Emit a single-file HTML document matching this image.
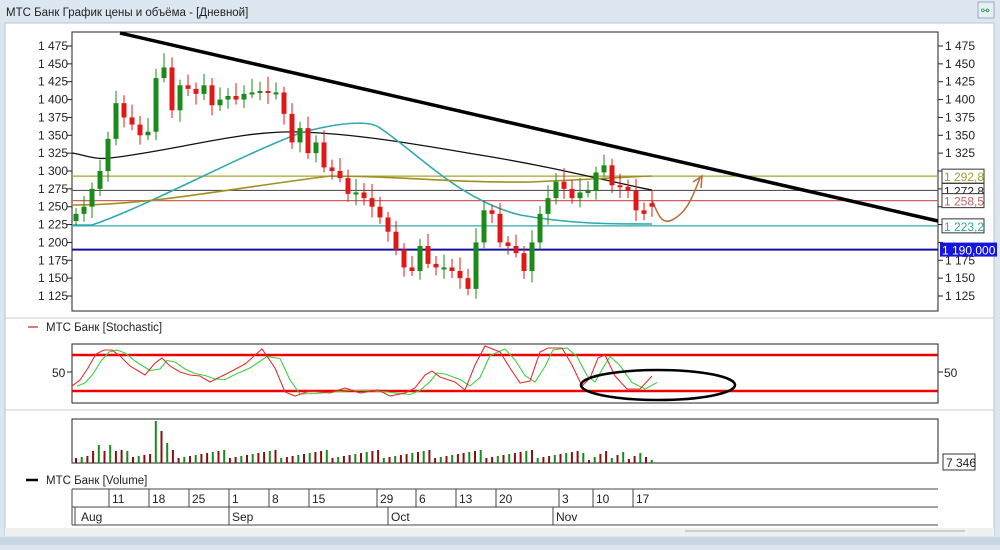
<!DOCTYPE html>
<html><head><meta charset="utf-8"><style>
body{margin:0;width:1000px;height:545px;overflow:hidden;background:#dce6f0;font-family:"Liberation Sans",sans-serif}
svg text{font-family:"Liberation Sans",sans-serif}
</style></head><body>
<svg id="s" width="1000" height="545" xmlns="http://www.w3.org/2000/svg">
<rect x="0" y="0" width="1000" height="545" fill="#dce6f0"/>
<rect x="0" y="0" width="1000" height="23" fill="#dde7f1"/>
<text x="6" y="16" font-size="11.5" fill="#222">МТС Банк График цены и объёма - [Дневной]</text>
<rect x="978" y="2" width="16" height="16" fill="#e6eef6" stroke="#9ab" stroke-width="1"/>
<text x="981" y="14" font-size="10" fill="#1a9a2a">⚯</text>
<rect x="5" y="23" width="989" height="512" fill="#fff" stroke="#b8c6d4"/>
<rect x="5" y="528" width="989" height="8" fill="#f0f0f0"/>
<line x1="685" y1="531" x2="965" y2="531" stroke="#aaa"/>
<rect x="0" y="537" width="1000" height="8" fill="#c8d6e4"/>
<!-- main plot -->
<rect x="72" y="32" width="866" height="279" fill="#fff" stroke="#222"/>
<g id="ylab" font-size="12" fill="#222"></g>
<g id="lines"></g>
<g id="candles"></g>
<!-- separators -->
<line x1="5" y1="318" x2="994" y2="318" stroke="#ccc"/>
<line x1="5" y1="410" x2="994" y2="410" stroke="#ccc"/>
<line x1="28" y1="327" x2="38" y2="327" stroke="#d44" stroke-width="1.5"/>
<text x="46" y="331" font-size="11.5" fill="#222">МТС Банк [Stochastic]</text>
<rect x="72" y="344" width="866" height="59" fill="none" stroke="#222"/>
<line x1="72" y1="355" x2="938" y2="355" stroke="#e00" stroke-width="2.5"/>
<line x1="72" y1="391" x2="938" y2="391" stroke="#e00" stroke-width="2.5"/>
<text x="52" y="377" font-size="12" fill="#222">50</text><line x1="67" y1="372" x2="72" y2="372" stroke="#222"/>
<text x="944" y="377" font-size="12" fill="#222">50</text><line x1="938" y1="372" x2="943" y2="372" stroke="#222"/>
<g id="stoch"></g>
<ellipse cx="658" cy="385" rx="77" ry="15" fill="none" stroke="#000" stroke-width="2.5"/>
<rect x="72" y="419" width="866" height="44" fill="none" stroke="#222"/>
<g id="vol"></g>
<rect x="943" y="454" width="32" height="16" fill="#fff" stroke="#333"/>
<text x="946" y="467" font-size="12" fill="#222">7 346</text>
<line x1="26" y1="480" x2="38" y2="480" stroke="#000" stroke-width="2.5"/>
<text x="46" y="484" font-size="11.5" fill="#222">МТС Банк [Volume]</text>
<g font-size="12" fill="#222" stroke-width="1">
<line x1="72" y1="489" x2="938" y2="489" stroke="#444"/>
<line x1="72" y1="507" x2="938" y2="507" stroke="#444"/>
<line x1="72" y1="525" x2="938" y2="525" stroke="#444"/>
<line x1="72" y1="489" x2="72" y2="525" stroke="#444"/>
<line x1="75" y1="507" x2="75" y2="525" stroke="#444"/>
<g id="dates"></g>
</g>
</svg>
<script>
const NS="http://www.w3.org/2000/svg";
function el(p,t,a,txt){const e=document.createElementNS(NS,t);for(const k in a)e.setAttribute(k,a[k]);if(txt!=null)e.textContent=txt;document.getElementById(p).appendChild(e);return e;}
const Y=p=>46+(1475-p)*0.7143;
for(let p=1125;p<=1475;p+=25){const y=Y(p);const l=(p/1000|0)+" "+String(p%1000).padStart(3,"0");
if(![1200,1250,1300].includes(p)||true){
el("ylab","text",{x:68,y:y+4,"text-anchor":"end"},l);
if(!(p==1300||p==1250||p==1200))el("ylab","text",{x:945,y:y+4},l);}
el("ylab","line",{x1:67,y1:y,x2:72,y2:y,stroke:"#222"});el("ylab","line",{x1:938,y1:y,x2:943,y2:y,stroke:"#222"});}
// horizontal level lines
[[1292.8,"#a8a030","1 292,8"],[1272.8,"#555","1 272,8"],[1258.5,"#d06060","1 258,5"],[1223.2,"#30a8a8","1 223,2"]].forEach(([p,c,t])=>{const y=Y(p);
el("lines","line",{x1:72,y1:y,x2:938,y2:y,stroke:c,"stroke-width":1.2});
el("lines","rect",{x:942,y:y-7,width:42,height:14,fill:"#fff",stroke:"#333"});
el("lines","text",{x:944,y:y+5,"font-size":12,fill:c=="#555"?"#222":c},t);});
{const y=Y(1190);el("lines","line",{x1:72,y1:y,x2:938,y2:y,stroke:"#1010a0","stroke-width":2});
el("lines","rect",{x:940,y:y-7,width:57,height:14,fill:"#1515e0"});
el("lines","text",{x:942,y:y+5,"font-size":12,fill:"#fff"},"1 190,000");}
// MAs
el("lines","path",{d:"M72,153 C85,155 95,160 110,158 C180,150 240,130 300,132 C360,134 420,145 480,155 C560,168 610,182 652,190",fill:"none",stroke:"#111","stroke-width":1.3});
el("lines","path",{d:"M72,225 L92,225 C150,205 230,160 300,133 C340,122 370,120 380,128 C420,155 460,200 520,215 C570,224 610,224 652,224",fill:"none",stroke:"#30a8b0","stroke-width":1.6});
el("lines","path",{d:"M72,205 C150,205 220,190 330,176 C400,176 450,183 530,182 C580,180 620,177 652,176",fill:"none",stroke:"#a09020","stroke-width":1.6});
el("lines","line",{x1:120,y1:33,x2:938,y2:221,stroke:"#000","stroke-width":3.5});
el("lines","path",{d:"M652,200 C658,215 662,225 672,220 C688,212 693,195 700,178 M693,182 L702,176 L701,188",fill:"none",stroke:"#b87040","stroke-width":1.6});
// candles
const c=[1240,1250,1275,1300,1345,1395,1375,1365,1350,1355,1430,1445,1385,1420,1415,1408,1420,1392,1400,1405,1400,1408,1410,1412,1410,1410,1380,1340,1360,1325,1340,1305,1300,1290,1268,1270,1262,1250,1235,1215,1190,1165,1160,1195,1170,1165,1165,1160,1150,1135,1200,1245,1240,1200,1195,1185,1160,1200,1240,1262,1285,1275,1262,1270,1272,1298,1308,1280,1278,1272,1245,1240,1250];
let prev=1230;
c.forEach((cl,i)=>{const x=76+i*8;const o=i==c.length-1?1255:prev;const up=cl>=o;const col=up?"#1a8a1a":"#e01818";
const hi=Math.max(o,cl)+8+((i*7)%13),lo=Math.min(o,cl)-6-((i*5)%11);
el("candles","line",{x1:x,y1:Y(hi),x2:x,y2:Y(lo),stroke:col,"stroke-width":1});
const h=Math.max(2,Math.abs(Y(o)-Y(cl)));el("candles","rect",{x:x-2.5,y:Math.min(Y(o),Y(cl)),width:5,height:h,fill:col});prev=cl;});
// stochastic
const k=[[72,386],[80,380],[88,368],[96,354],[104,350],[112,350],[120,356],[130,366],[145,375],[155,363],[162,358],[170,366],[180,372],[190,375],[200,376],[210,382],[220,377],[230,372],[245,364],[262,349],[275,368],[285,392],[295,396],[310,391],[330,393],[345,388],[360,393],[378,390],[390,396],[405,393],[415,388],[425,375],[432,371],[440,377],[455,382],[465,390],[475,365],[485,346],[500,352],[510,368],[520,383],[530,381],[540,352],[548,348],[562,348],[572,365],[582,386],[590,378],[598,358],[605,355],[615,376],[627,389],[640,389],[652,376]];
const d=k.map(([x,y],i)=>[x+5,i?(y+k[i-1][1])/2:y]);
el("stoch","polyline",{points:d.map(p=>p.join(",")).join(" "),fill:"none",stroke:"#40d040","stroke-width":1.1});
el("stoch","polyline",{points:k.map(p=>p.join(",")).join(" "),fill:"none",stroke:"#e03030","stroke-width":1.1});
// volume
for(let i=0;i<102;i++){const x=75+i*5.7;let h=5+((i*37)%9);if(i==14)h=42;if(i==15)h=32;if(i==16)h=20;if(i==4||i==6)h=18;if(i==3||i==5||i==9)h=12;if(i==101)h=3;if(i>88&&i<100)h=3+((i*13)%10);
const g=((i*7+3)%5)<2;el("vol","rect",{x:x,y:463-h,width:2,height:h,fill:g?"#1a8a1a":"#8a1010"});}
// dates
[[109,"11"],[149,"18"],[189,"25"],[229,"1"],[269,"8"],[309,"15"],[377,"29"],[416,"6"],[456,"13"],[496,"20"],[559,"3"],[593,"10"],[633,"17"]].forEach(([x,t])=>{el("dates","line",{x1:x,y1:489,x2:x,y2:507,stroke:"#444"});el("dates","text",{x:x+3,y:503},t);});
[[78,"Aug"],[229,"Sep"],[388,"Oct"],[553,"Nov"]].forEach(([x,t],i)=>{if(i)el("dates","line",{x1:x,y1:507,x2:x,y2:525,stroke:"#444"});el("dates","text",{x:x+3,y:521},t);});
</script>
</body></html>
